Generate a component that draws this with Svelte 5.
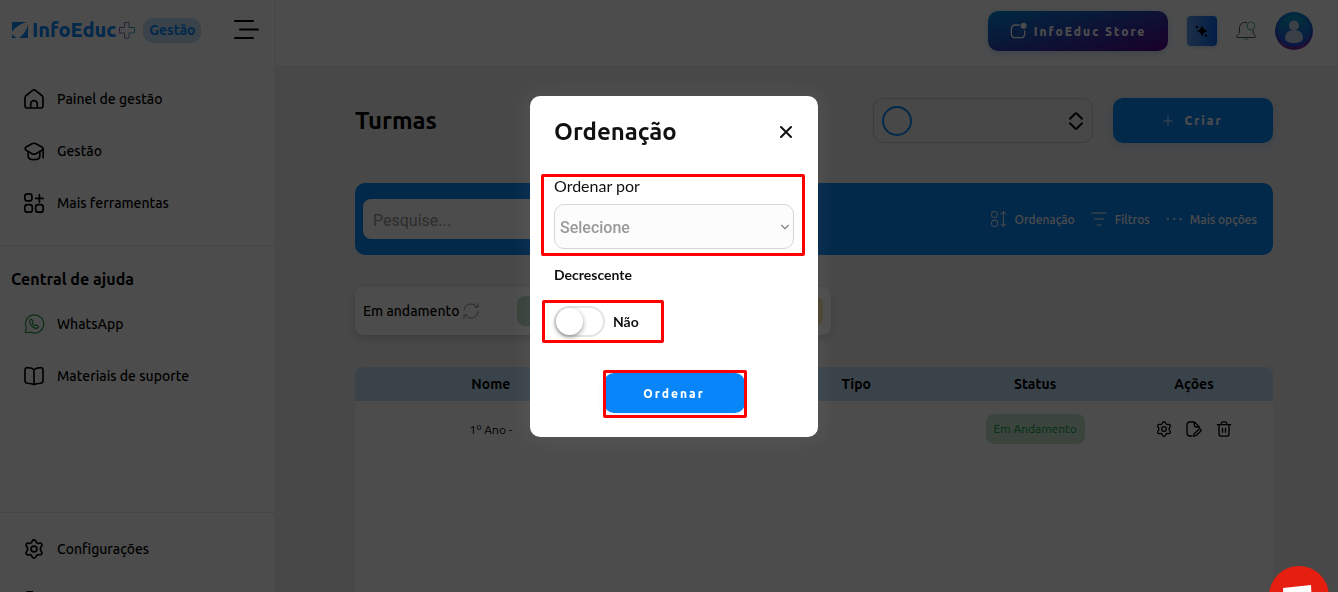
<script lang="ts">
	let open = true
	let descending = false
	let order = ''
	let search = ''

	const menu = [
		{ icon: 'home', label: 'Painel de gestão' },
		{ icon: 'cap', label: 'Gestão' },
		{ icon: 'grid', label: 'Mais ferramentas' }
	]
	const help = [
		{ icon: 'whatsapp', label: 'WhatsApp' },
		{ icon: 'book', label: 'Materiais de suporte' }
	]
	const actions = [
		{ icon: 'sort', label: 'Ordenação' },
		{ icon: 'filter', label: 'Filtros' },
		{ icon: 'dots', label: 'Mais opções' }
	]
	const rowActions = [
		{ icon: 'gear', label: 'Configurar' },
		{ icon: 'edit', label: 'Editar' },
		{ icon: 'trash', label: 'Excluir' }
	]
</script>

{#snippet icon(name: string, size: number)}
	<svg class="icon {name}" width={size} height={size} viewBox="0 0 24 24" aria-hidden="true">
		{#if name === 'home'}
			<path d="M1.2 10.6c0-1 .4-1.8 1.1-2.5l7.6-6.2c1.3-1 2.9-1 4.2 0l7.6 6.2c.7.7 1.1 1.5 1.1 2.5v9.6c0 1.5-1.1 2.6-2.6 2.6H3.8c-1.5 0-2.6-1.1-2.6-2.6z" />
			<path d="M8 22.5V18a4 4 0 0 1 8 0v4.5" />
		{:else if name === 'cap'}
			<path d="M2.5 7.3 9.6 3.3c1.6-.8 3.2-.8 4.8 0l7.1 4c1.5.9 1.5 3 0 3.9l-7.1 4c-1.6.8-3.2.8-4.8 0l-7.1-4c-1.5-.9-1.5-3 0-3.9z" />
			<path d="M5 12.8v5.2c0 3.5 3.4 4.4 7 4.4s7-.9 7-4.4v-5.2M23 9.5V20" />
		{:else if name === 'grid'}
			<rect x="1" y="1" width="8.5" height="8.5" rx="3" />
			<rect x="1" y="14" width="9" height="9" rx="3" />
			<rect x="14" y="14" width="9" height="9" rx="3" />
			<path d="M18.5 2v9M14 6.5h9" />
		{:else if name === 'whatsapp'}
			<path d="M1.5 22.5l1.2-6.3A10.9 10.9 0 1 1 8 21.7z" />
			<path d="M7.2 7.5c1-1.5 2.3-1.4 2.9.1l.6 1.5c.2.6-.8 1.3-.7 1.9.5 1.3 1.7 2.5 3 3 .6.1 1.3-.9 1.9-.7l1.5.8c1.4.6 1.4 1.8 0 2.6-1.3.9-2.9.6-4.3-.1-2-.9-3.7-2.6-4.6-4.5-.8-1.6-1.1-3.2-.3-4.6z" />
		{:else if name === 'book'}
			<path d="M12 4.5v17.5M12 4.5C10.5 3 8.5 2.3 4.5 2 2.5 1.8 1.2 3 1.2 5v12.5c0 1.9 1 3 3 3.200 3 .2 5.800.6 7.800 1.600 2-1 4.800-1.400 7.800-1.600 2-.2 3-1.300 3-3.200V5c0-2-1.300-3.200-3.300-3C15.500 2.300 13.500 3 12 4.500z" />
		{:else if name === 'gear'}
			<circle cx="12" cy="12" r="3.5" />
			<path d="M10 2.2c.8-1.6 3.2-1.6 4 0l.7 1.5c.6 1.2 1.5 1.7 2.8 1.5l1.7-.2c1.8-.2 3 1.9 2 3.400l-1 1.500c-.8 1.400-.8 2.800 0 4.200l1 1.500c1 1.500-.2 3.600-2 3.400l-1.700-.2c-1.300-.2-2.200.3-2.800 1.500l-.7 1.500c-.8 1.600-3.200 1.600-4 0l-.7-1.500c-.6-1.200-1.500-1.700-2.800-1.500l-1.700.2c-1.800.2-3-1.900-2-3.400l1-1.500c.8-1.400.8-2.800 0-4.200l-1-1.500c-1-1.500.2-3.600 2-3.400l1.700.2c1.300.2 2.200-.3 2.800-1.500z" />
		{:else if name === 'exit'}
			<path d="M10 1H5C2.5 1 1.2 2.5 1.2 5v14c0 2.5 1.3 4 3.8 4h5M8 12h15M18 7l5 5-5 5" />
		{:else if name === 'sort'}
			<rect x="1" y="1" width="8.5" height="8.5" rx="2.5" />
			<rect x="1" y="14" width="9" height="9" rx="2.5" />
			<path d="M18.5 1.5v21M14.5 4.5l4-3.5 4 3.5M14.5 19.5l4 3.5 4-3.5" />
		{:else if name === 'filter'}
			<path d="M1 3h22M5 12h14M9 21h6" />
		{:else if name === 'dots'}
			<circle cx="2.5" cy="12" r="1" />
			<circle cx="12" cy="12" r="1" />
			<circle cx="21.5" cy="12" r="1" />
		{:else if name === 'edit'}
			<path d="M9 22.5H6c-3 0-4.5-1.5-4.5-4.5V6c0-3 1.5-4.5 4.5-4.5h6.5L20 9v1M12.5 1.5V6c0 2 1 3 3 3H20" />
			<path d="M12 19.5l7.5-7.2c1.8-1.5 4.2.8 2.8 2.6L15 22l-3.5.8z" />
		{:else if name === 'trash'}
			<path d="M2 5.5h20M8 5V3.5C8 2 9 1.2 10.5 1.2h3c1.5 0 2.5.8 2.5 2.3V5M4.5 5.5V19c0 2.500 1.300 3.800 3.800 3.800h7.400c2.500 0 3.800-1.300 3.800-3.800V5.500M9.800 11v6M14.200 11v6" />
		{:else if name === 'refresh'}
			<path d="M1.5 11C2 5 6.5 1.5 12 1.5c3.5 0 6.5 1.3 8.5 4M22.5 1v5h-5M22.5 13C22 19 17.5 22.5 12 22.5c-3.5 0-6.5-1.3-8.5-4M1.500 23v-5h5" />
		{:else if name === 'app'}
			<path d="M14 3H8C4 3 2 5 2 9v7c0 4 2 6 6 6h8c4 0 6-2 6-6V12" />
			<circle class="solid" cx="20.5" cy="4" r="4.5" />
		{:else if name === 'updown'}
			<path d="M4 9l7-7q1-1 2 0l7 7M4 15l7 7q1 1 2 0l7-7" />
		{:else if name === 'plus'}
			<path d="M12 1v22M1 12h22" />
		{:else if name === 'close'}
			<path d="M2 2l20 20M22 2L2 22" />
		{:else if name === 'chevron'}
			<path d="M2 7l10 10 10-10" />
		{/if}
	</svg>
{/snippet}

<div class="layout">
	<aside>
		<div class="brand">
			<a class="logo" href="/">
				<svg width="17" height="16" viewBox="0 0 17 16" aria-hidden="true">
					<path fill="#0885f8" d="M0 0h15C8 2 3 5 0 10zM0 12c1 2 3 3 5 4H0zM16 2v14H7c5-4 8-8 9-14z" />
				</svg>
				<b>InfoEduc</b>
				<svg width="16" height="17" viewBox="0 0 16 17" aria-hidden="true">
					<defs>
						<linearGradient id="cross" x1="0" y1="0" x2="1" y2="0">
							<stop offset="0" stop-color="#9a58b8" />
							<stop offset="1" stop-color="#31b8bf" />
						</linearGradient>
					</defs>
					<path fill="none" stroke="url(#cross)" stroke-linejoin="round" d="M5.500.5h4.500v5h5.500v5.500h-5.500v5h-4.500v-5h-5v-5.500h5z" />
				</svg>
			</a>
			<span class="tag">Gestão</span>
			<button class="burger" aria-label="Recolher menu">
				<svg width="26" height="20" viewBox="0 0 26 20">
					<path fill="none" stroke="#000" stroke-width="2" stroke-linecap="round" d="M2 1h18M7 9.500h18M2 18h18" />
				</svg>
			</button>
		</div>
		<nav class="menu">
			{#each menu as item}
				<a href="/">{@render icon(item.icon, 20)}{item.label}</a>
			{/each}
		</nav>
		<nav class="help">
			<h2>Central de ajuda</h2>
			{#each help as item}
				<a href="/">{@render icon(item.icon, 20)}{item.label}</a>
			{/each}
		</nav>
		<nav class="bottom">
			<a href="/">{@render icon('gear', 20)}Configurações</a>
			<a href="/" aria-label="Sair">{@render icon('exit', 20)}</a>
		</nav>
	</aside>

	<div class="page">
		<header>
			<button class="store">{@render icon('app', 16)}InfoEduc Store</button>
			<button class="ai" aria-label="Assistente">
				<svg width="14" height="14" viewBox="0 0 14 14">
					<path d="M7 1q.8 5 6 6-5.200 1-6 6Q6.200 8 1.500 7q4.700-1 5.500-6z" />
					<circle cx="2" cy="3" r="1.2" />
					<circle cx="11" cy="11.500" r="1.2" />
				</svg>
			</button>
			<button class="bell" aria-label="Notificações">
				<svg width="20" height="20" viewBox="0 0 20 20" fill="none">
					<path stroke="#555" d="M11 1.500H8.500C5.500 1.500 3.500 4 3.500 7v4c0 2-2.500 3-3 4.500-.1.600.2 1 .7 1h17.600c.5 0 .8-.4.7-1-.5-1.500-2.500-2.500-2.500-4.500V9" />
					<circle stroke="#59b3ac" cx="15" cy="5" r="4" />
					<path stroke="#59b3ac" d="M8 17q2 4 4 0" />
				</svg>
			</button>
			<button class="avatar" aria-label="Perfil">
				<svg width="38" height="38" viewBox="0 0 38 38">
					<defs>
						<linearGradient id="ring" x1="0" y1="0" x2="0" y2="1">
							<stop offset="0" stop-color="#0787d8" />
							<stop offset=".6" stop-color="#2746c8" />
							<stop offset="1" stop-color="#842c90" />
						</linearGradient>
						<linearGradient id="face" x1="0" y1="0" x2="0" y2="1">
							<stop offset="0" stop-color="#08a0c8" />
							<stop offset="1" stop-color="#2848e0" />
						</linearGradient>
					</defs>
					<circle cx="19" cy="19" r="19" fill="url(#ring)" />
					<circle cx="19" cy="19" r="16" fill="url(#face)" />
					<circle cx="19" cy="13.500" r="5" fill="#c7d5ea" />
					<path fill="#c7d5ea" d="M10 26c0-5 4-8 9-8s9 3 9 8c0 3-4 5-9 5s-9-2-9-5z" />
				</svg>
			</button>
		</header>

		<main>
			<div class="heading">
				<h1>Turmas</h1>
				<button class="picker" aria-label="Selecionar unidade">
					<span class="ring"></span>
					{@render icon('updown', 18)}
				</button>
				<button class="create">{@render icon('plus', 10)}Criar</button>
			</div>

			<div class="toolbar">
				<input type="search" placeholder="Pesquise..." aria-label="Pesquise" bind:value={search} />
				{#each actions as item}
					<button on:click={() => item.icon === 'sort' && (open = true)}>
						{@render icon(item.icon, 16)}{item.label}
					</button>
				{/each}
			</div>

			<div class="summary">
				<span>Em andamento</span>
				{@render icon('refresh', 16)}
				<i class="pill green"></i>
				<i class="pill yellow"></i>
			</div>

			<div class="list">
				<table>
					<thead>
						<tr>
							<th class="name">Nome</th>
							<td class="gap"></td>
							<th class="type">Tipo</th>
							<th class="status">Status</th>
							<th>Ações</th>
						</tr>
					</thead>
					<tbody>
						<tr>
							<td>1º Ano -</td>
							<td></td>
							<td></td>
							<td><span class="state">Em Andamento</span></td>
							<td>
								<div class="tools">
									{#each rowActions as item}
										<button aria-label={item.label}>{@render icon(item.icon, 16)}</button>
									{/each}
								</div>
							</td>
						</tr>
					</tbody>
				</table>
			</div>
		</main>
	</div>
</div>

{#if open}
	<div class="overlay">
		<form class="modal" role="dialog" aria-labelledby="sort-title" on:submit|preventDefault={() => (open = false)}>
			<div class="top">
				<h2 id="sort-title">Ordenação</h2>
				<button type="button" aria-label="Fechar" on:click={() => (open = false)}>{@render icon('close', 12)}</button>
			</div>
			<div class="field">
				<label for="order">Ordenar por</label>
				<div class="select">
					<select id="order" bind:value={order}>
						<option value="">Selecione</option>
					</select>
					{@render icon('chevron', 8)}
				</div>
			</div>
			<p>Decrescente</p>
			<label class="switch">
				<input type="checkbox" bind:checked={descending} />
				<span class="track"></span>
				{descending ? 'Sim' : 'Não'}
			</label>
			<div class="submit">
				<button>Ordenar</button>
			</div>
		</form>
	</div>
{/if}

<button class="chat" aria-label="Chat">
	<svg width="60" height="60" viewBox="0 0 60 60">
		<path fill="#fff" d="M14 22l28-3 1 22-28 3z" />
	</svg>
</button>

<style>
	:global(body) {
		overflow: hidden;
		background: #f0f0f0;
	}
	.layout,
	.overlay {
		font-family: Ubuntu, 'Noto Sans', sans-serif;
		font-size: 14px;
		color: #000;
	}
	.layout {
		display: flex;
		height: 100vh;
		overflow: hidden;
		font-weight: 500;
	}
	button {
		display: flex;
		align-items: center;
		justify-content: center;
		border: none;
		padding: 0;
		background: none;
		font-family: inherit;
		color: inherit;
		cursor: pointer;
	}
	a {
		color: inherit;
		text-decoration: none;
	}
	h1,
	h2,
	p {
		margin: 0;
	}
	.icon {
		flex: none;
		fill: none;
		stroke: currentColor;
		stroke-width: 2;
		stroke-linecap: round;
		stroke-linejoin: round;
		overflow: visible;
	}
	.solid {
		fill: currentColor;
		stroke: none;
	}

	/* sidebar */
	aside {
		display: flex;
		flex-direction: column;
		flex: 0 0 275px;
		border-right: 1px solid #e8e8e8;
		background: #fff;
	}
	.brand {
		display: flex;
		align-items: center;
		height: 60px;
		padding: 0 16px 0 12px;
		margin-bottom: 13px;
	}
	.logo {
		display: flex;
		align-items: center;
		gap: 3px;
	}
	.logo b {
		font-size: 20px;
		line-height: 20px;
		font-weight: 800;
		color: #0885f8;
	}
	.tag {
		margin-left: 8px;
		padding: 0 6px;
		border-radius: 10px;
		background: #c2dff8;
		font-size: 14px;
		line-height: 25px;
		font-weight: 700;
		color: #0885f8;
	}
	.burger {
		margin-left: auto;
	}
	nav a {
		display: flex;
		align-items: center;
		gap: 13px;
		height: 52px;
		padding-left: 24px;
	}
	.menu {
		padding-bottom: 16px;
		border-bottom: 1px solid #e8e8e8;
	}
	.help {
		flex: 1;
		padding-top: 20px;
	}
	.help h2 {
		padding: 0 0 6px 11px;
		font-size: 16px;
		line-height: 26px;
	}
	.whatsapp {
		color: #259b45;
		stroke-width: 1.5;
	}
	.bottom {
		flex: 0 0 69px;
		overflow: hidden;
		padding-top: 10px;
		border-top: 1px solid #e8e8e8;
	}

	/* header */
	.page {
		display: flex;
		flex-direction: column;
		flex: 1;
		min-width: 0;
	}
	header {
		display: flex;
		align-items: center;
		justify-content: flex-end;
		gap: 19px;
		height: 62px;
		padding: 0 25px 4px 0;
		border-bottom: 1px solid #e8e8e8;
		background: #fff;
	}
	header button {
		flex: none;
	}
	.store,
	.create {
		border-radius: 10px;
		font-size: 12px;
		font-weight: 800;
		letter-spacing: 2px;
		color: #fff;
	}
	.store {
		gap: 8px;
		width: 180px;
		height: 40px;
		background: linear-gradient(165deg, #0088d8, #2b42b4 50%, #57008c);
		box-shadow: 0 2px 10px #c4dcf4;
	}
	.ai {
		width: 30px;
		height: 30px;
		border-radius: 4px;
		background: linear-gradient(90deg, #609be8, #0868f0);
		box-shadow: 0 1px 6px #c4dcf4;
	}

	/* content */
	main {
		display: flex;
		flex-direction: column;
		flex: 1;
		padding: 31px 65px 0 79px;
		background: #f0f0f0;
	}
	.heading {
		display: flex;
		align-items: center;
		gap: 20px;
		margin-bottom: 40px;
	}
	h1 {
		flex: 1;
		font-size: 24px;
		line-height: 32px;
	}
	.picker {
		justify-content: space-between;
		width: 220px;
		height: 45px;
		padding: 0 7px 0 8px;
		border: 1px solid #ccc;
		border-radius: 10px;
	}
	.updown {
		stroke-width: 2.5;
	}
	.ring {
		width: 26px;
		height: 26px;
		border: 2px solid #0885f8;
		border-radius: 50%;
	}
	.create {
		gap: 11px;
		width: 160px;
		height: 45px;
		background: #0885f8;
		box-shadow: 0 2px 8px #c4dcf4;
	}
	.toolbar {
		display: flex;
		align-items: center;
		gap: 16px;
		height: 72px;
		padding: 0 16px 0 8px;
		margin-bottom: 32px;
		border-radius: 10px;
		background: #0885f8;
	}
	.toolbar input {
		width: 320px;
		height: 40px;
		box-sizing: border-box;
		margin-right: auto;
		padding: 2px 10px 0;
		border: none;
		border-radius: 8px;
		background: #fff;
		font: 16px Roboto, sans-serif;
	}
	.toolbar input::placeholder {
		color: #999;
	}
	.toolbar button {
		gap: 8px;
		font-size: 12px;
		font-weight: 500;
		color: #fff;
	}
	.toolbar .icon {
		stroke-width: 1.5;
	}
	.summary {
		display: flex;
		align-items: center;
		align-self: flex-start;
		box-sizing: border-box;
		width: 476px;
		height: 48px;
		padding: 0 8px;
		margin-bottom: 32px;
		border-radius: 8px;
		background: #fff;
		box-shadow: 0 3px 6px #ccc;
	}
	.refresh {
		margin-left: 4px;
		color: #888;
		stroke-width: 1.5;
	}
	.pill {
		width: 122px;
		height: 30px;
		border-radius: 8px;
	}
	.green {
		margin-left: auto;
		background: #b9dcc4;
	}
	.yellow {
		margin-left: 62px;
		background: #efdca8;
	}
	.list {
		flex: 1;
		border-radius: 8px 8px 0 0;
		overflow: hidden;
		background: #fff;
	}
	table {
		width: 100%;
		table-layout: fixed;
		border-collapse: collapse;
		text-align: center;
	}
	th,
	td {
		padding: 0;
	}
	thead tr {
		height: 34px;
		background: #c2dff8;
	}
	.name {
		width: 29.6%;
	}
	.gap {
		width: 14.2%;
	}
	.type {
		width: 21.6%;
	}
	.status {
		width: 17.4%;
	}
	tbody tr {
		height: 56px;
		font-size: 12px;
		font-weight: 400;
	}
	.state {
		display: inline-block;
		padding: 0 8px;
		border-radius: 8px;
		background: #c5e8cf;
		line-height: 30px;
		color: #0a9a44;
	}
	.tools {
		display: flex;
		justify-content: center;
		gap: 14px;
	}

	/* modal */
	.overlay {
		position: fixed;
		inset: 0;
		display: flex;
		align-items: flex-start;
		justify-content: center;
		padding: 96px 0 0 10px;
		background: rgba(0, 0, 0, 0.7);
	}
	.modal {
		box-sizing: border-box;
		width: 288px;
		padding: 24px;
		border-radius: 10px;
		background: #fff;
		box-shadow: 0 0 20px rgba(255, 255, 255, 0.07);
		font-family: Lato, sans-serif;
		color: #111;
	}
	.top {
		display: flex;
		align-items: center;
		justify-content: space-between;
		height: 24px;
		margin-bottom: 32px;
		padding-right: 2px;
	}
	.top h2 {
		font: 700 24px/32px Ubuntu, 'Noto Sans', sans-serif;
	}
	.close {
		stroke-width: 4;
	}
	.field,
	.switch,
	.submit {
		position: relative;
	}
	/* red highlight frames around each step */
	.field::after,
	.switch::after,
	.submit::after {
		content: '';
		position: absolute;
		border: 3px solid #f00;
		border-radius: 2px;
		pointer-events: none;
	}
	.field::after {
		inset: -2px -11px -7px -13px;
	}
	.switch::after {
		inset: -5px -25px -6px -12px;
	}
	.submit::after {
		inset: -3px -2px -5px -1px;
	}
	.field {
		margin-bottom: 16px;
	}
	.field label {
		display: block;
		margin-bottom: 8px;
		font-size: 16px;
		line-height: 20px;
	}
	.select {
		position: relative;
		display: flex;
	}
	.select .icon {
		position: absolute;
		top: 19px;
		right: 5px;
		color: #888;
		stroke-width: 4;
		pointer-events: none;
	}
	select {
		appearance: none;
		width: 100%;
		height: 45px;
		padding: 2px 5px 0;
		border: 1px solid #d6d6d6;
		border-radius: 10px;
		background: #fcfcfc;
		font: 500 16px Roboto, sans-serif;
		color: #999;
	}
	p {
		margin-bottom: 20px;
		font-size: 14px;
		line-height: 20px;
		font-weight: 700;
	}
	.switch {
		display: flex;
		align-items: center;
		gap: 8px;
		width: fit-content;
		height: 32px;
		margin-bottom: 36px;
		font-weight: 700;
	}
	.switch input {
		position: absolute;
		opacity: 0;
	}
	.track {
		box-sizing: border-box;
		width: 51px;
		height: 31px;
		border: 2px solid #e4e4e4;
		border-radius: 16px;
	}
	.track::before {
		content: '';
		display: block;
		width: 27px;
		height: 27px;
		border-radius: 50%;
		background: #fff;
		box-shadow: 0 2px 5px rgba(0, 0, 0, 0.4);
	}
	input:checked + .track {
		background: #0885f8;
	}
	input:checked + .track::before {
		margin-left: 20px;
	}
	.submit {
		width: 141px;
		margin: 0 auto;
	}
	.submit button {
		width: 100%;
		height: 40px;
		border-radius: 10px;
		background: #0885f8;
		box-shadow: 0 2px 10px #dbeafa;
		font: 800 12px Ubuntu, 'Noto Sans', sans-serif;
		letter-spacing: 2px;
		color: #fff;
	}

	.chat {
		position: fixed;
		right: 9px;
		bottom: -34px;
		width: 60px;
		height: 60px;
		border-radius: 50%;
		background: #e61e10;
	}
</style>
